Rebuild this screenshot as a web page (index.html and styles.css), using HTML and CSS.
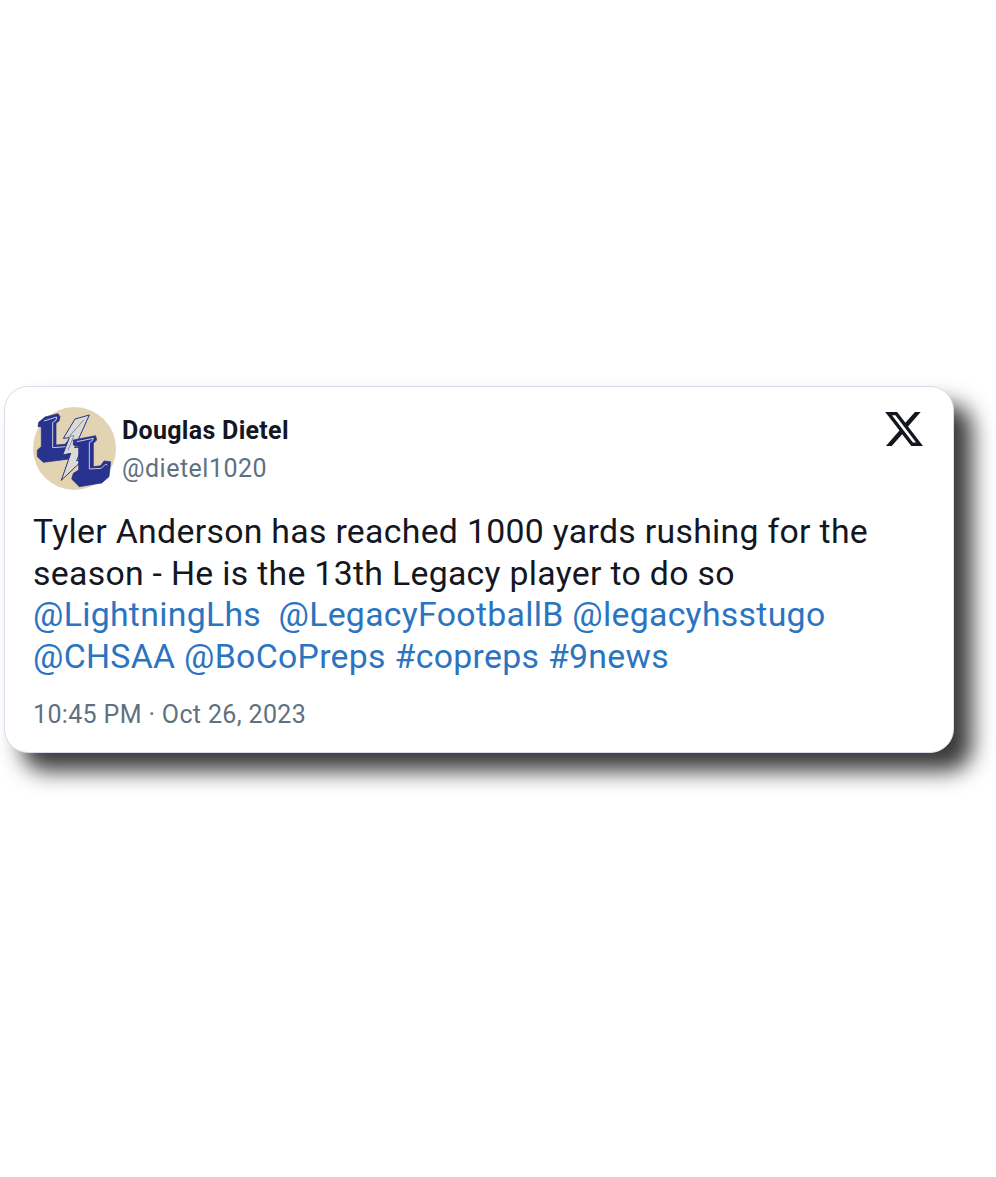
FILE: index.html
```html
<!DOCTYPE html>
<html lang="en">
<head>
<meta charset="utf-8">
<title>Tweet</title>
<link rel="stylesheet" href="styles.css">
</head>
<body>
<article class="card">
  <header class="head">
    <svg class="avatar" viewBox="9 6 249 249" aria-hidden="true">
      <circle cx="133.500" cy="130.500" r="124.500" fill="#e2d4b2"/>
      <polygon class="letter" points="26,52 45,36 84,26 90,35 87,48 78,55 78,120 105,118 120,100 136,98 136,145 118,162 40,172 22,155 22,135 34,125 34,65 24,65"/>
      <polyline class="inline" points="42,48 80,36 78,46 68,52 68,128 108,125 124,108 128,112"/>
      <polygon class="bolt" points="178,30 135,42 100,100 118,98 98,150 122,145 94,226 158,165 140,167 158,125 134,128"/>
      <polyline class="bolt-in" points="162,44 118,94 132,92 114,136"/>
      <polygon class="letter" points="130,105 197,92 200,105 190,115 190,185 212,182 222,168 242,170 237,215 215,234 148,245 125,222 130,205 146,195 146,125 130,120"/>
      <polyline class="inline" points="140,110 190,100 186,108 178,112 178,192 214,190 226,178 232,180"/>
    </svg>
    <div class="who">
      <div class="name">Douglas Dietel</div>
      <div class="handle">@dietel1020</div>
    </div>
    <svg class="x-logo" viewBox="0 0 24 24" aria-hidden="true">
      <path d="M18.244 2.25h3.308l-7.227 8.26 8.502 11.24H16.17l-5.214-6.817L4.99 21.75H1.68l7.73-8.835L1.254 2.25H8.08l4.713 6.231zm-1.161 17.52h1.833L7.084 4.126H5.117z"/>
    </svg>
  </header>
  <p class="text">Tyler Anderson has reached 1000 yards rushing for the season - He is the 13th Legacy player to do so <span class="link">@LightningLhs</span>&nbsp; <span class="link">@LegacyFootballB</span> <span class="link">@legacyhsstugo</span> <span class="link">@CHSAA</span> <span class="link">@BoCoPreps</span> <span class="link">#copreps</span> <span class="link">#9news</span></p>
  <time class="time">10:45 PM · Oct 26, 2023</time>
</article>
</body>
</html>
```

FILE: styles.css
```css
html, body {
  margin: 0;
  background: #fff;
}
body {
  padding: 386px 42px 0 4px;
  font-family: Roboto, "Liberation Sans", sans-serif;
  height: 791px;
  overflow: hidden;
}
.card {
  box-sizing: border-box;
  height: 367px;
  background: #fff;
  border: 1px solid #dedcec;
  border-radius: 24px;
  box-shadow: 18px 18px 22px rgba(0, 0, 0, 0.78);
  padding: 20px 28px 0;
}
.head {
  display: flex;
  align-items: flex-start;
}
.avatar {
  width: 83px;
  height: 83px;
  flex: none;
}
.letter { fill: #28328f; stroke: #1f2a80; stroke-width: 2; }
.inline { fill: none; stroke: #c9cde2; stroke-width: 3; }
.bolt { fill: #dcdad4; stroke: #2a3288; stroke-width: 3; }
.bolt-in { fill: none; stroke: #7f87bd; stroke-width: 3; }
.who {
  flex: 1;
  margin-left: 6px;
  padding-top: 8px;
}
.name {
  font-size: 25px;
  line-height: 32px;
  font-weight: 700;
  letter-spacing: 0.3px;
  color: #14171f;
}
.handle {
  margin-top: 6px;
  font-size: 25px;
  line-height: 32px;
  letter-spacing: 0.5px;
  color: #5f7180;
}
.x-logo {
  width: 42px;
  height: 42px;
  margin-top: 1px;
  flex: none;
  fill: #14171f;
}
.text {
  margin: 21px 0 0;
  font-size: 33.800px;
  line-height: 41.500px;
  letter-spacing: 0.3px;
  color: #14171f;
}
.link {
  color: #2b74c0;
}
.time {
  display: block;
  margin-top: 22px;
  font-size: 25px;
  line-height: 32px;
  letter-spacing: 0.35px;
  color: #5f7180;
}
```
